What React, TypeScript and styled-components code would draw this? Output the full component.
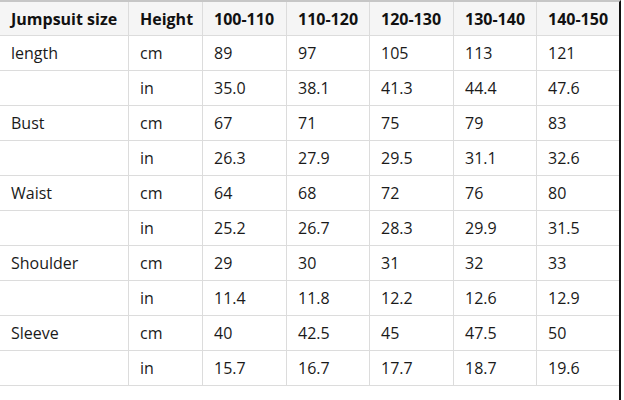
import styled, { createGlobalStyle } from 'styled-components'

const Global = createGlobalStyle`
  body {
    margin: 0;
    background: #fff;
    font-family: "Open Sans", "Noto Sans", sans-serif;
  }
`

const Frame = styled.div`
  width: 621px;
  height: 400px;
  border-top: 2px solid #c6c6c6;
  border-right: 2px solid #111;
  box-sizing: border-box;
  overflow: hidden;
`

const Table = styled.table`
  border-collapse: collapse;
  table-layout: fixed;
  width: 620px;
  margin-left: -1px;
  font-size: 16px;
  color: #1a1a1a;
`

const Head = styled.th`
  height: 33px;
  padding: 0 0 0 11px;
  text-align: left;
  font-weight: 700;
  background: #f5f5f5;
  border: 1px solid #dcdcdc;
  border-top: none;
  color: #111;
  white-space: nowrap;
`

const Cell = styled.td`
  height: 34px;
  padding: 0 0 0 11px;
  border: 1px solid #dcdcdc;
`

const widths = [129, 74, 84, 83, 84, 83, 83]
const sizes = ['100-110', '110-120', '120-130', '130-140', '140-150']

const rows: [string, string[], string[]][] = [
  ['length', ['89', '97', '105', '113', '121'], ['35.0', '38.1', '41.3', '44.4', '47.6']],
  ['Bust', ['67', '71', '75', '79', '83'], ['26.3', '27.9', '29.5', '31.1', '32.6']],
  ['Waist', ['64', '68', '72', '76', '80'], ['25.2', '26.7', '28.3', '29.9', '31.5']],
  ['Shoulder', ['29', '30', '31', '32', '33'], ['11.4', '11.8', '12.2', '12.6', '12.9']],
  ['Sleeve', ['40', '42.5', '45', '47.5', '50'], ['15.7', '16.7', '17.7', '18.7', '19.6']],
]

export default function App() {
  return (
    <>
      <Global />
      <Frame>
        <Table>
          <colgroup>
            {widths.map((w, i) => (
              <col key={i} style={{ width: w }} />
            ))}
          </colgroup>
          <thead>
            <tr>
              <Head>Jumpsuit size</Head>
              <Head>Height</Head>
              {sizes.map((s) => (
                <Head key={s}>{s}</Head>
              ))}
            </tr>
          </thead>
          <tbody>
            {rows.map(([name, cm, inch]) => [
              <tr key={name + 'cm'}>
                <Cell>{name}</Cell>
                <Cell>cm</Cell>
                {cm.map((v, i) => (
                  <Cell key={i}>{v}</Cell>
                ))}
              </tr>,
              <tr key={name + 'in'}>
                <Cell />
                <Cell>in</Cell>
                {inch.map((v, i) => (
                  <Cell key={i}>{v}</Cell>
                ))}
              </tr>,
            ])}
          </tbody>
        </Table>
      </Frame>
    </>
  )
}
